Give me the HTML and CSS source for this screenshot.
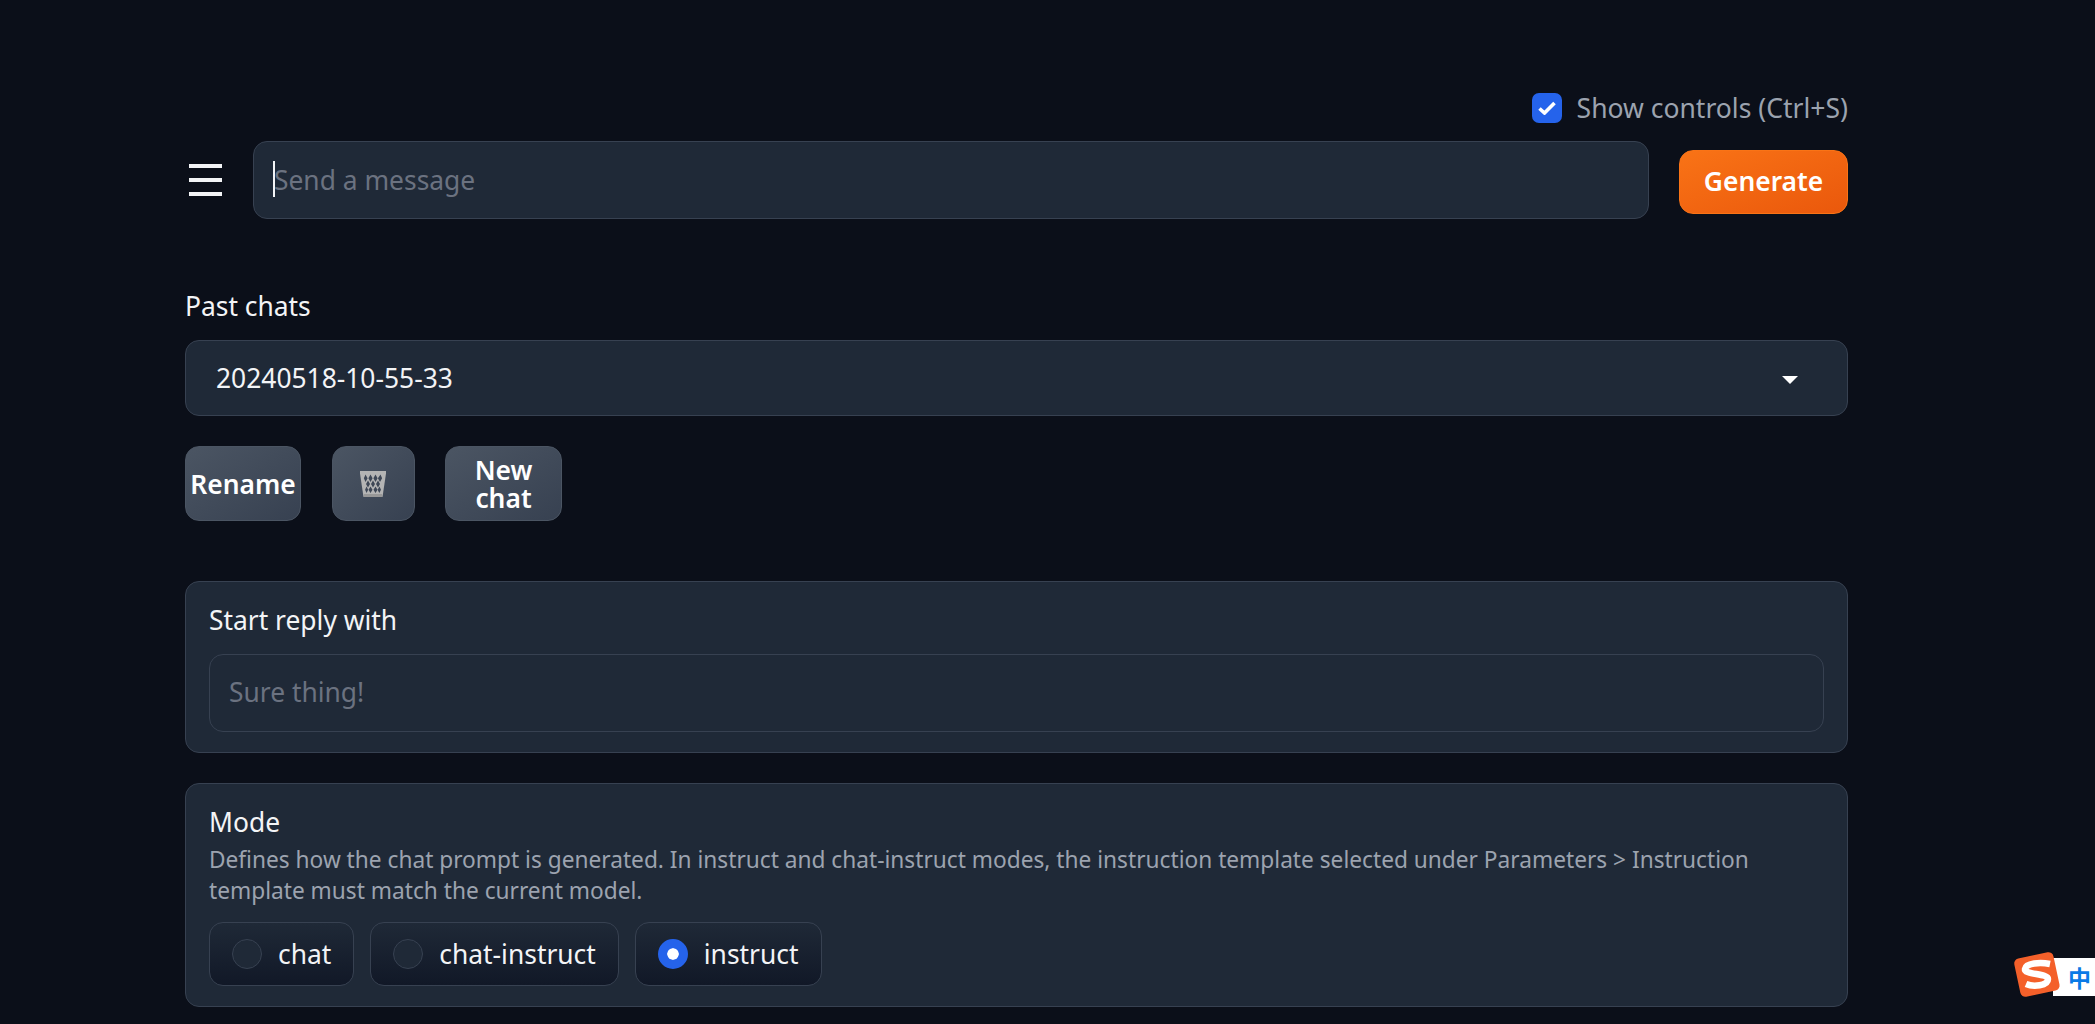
FILE: index.html
```html
<!DOCTYPE html>
<html lang="en">
<head>
  <meta charset="UTF-8" />
  <title>Chat</title>
  <link rel="stylesheet" href="styles.css">
</head>
<body>
  <main class="page">
    <!-- Show controls -->
    <label class="show-controls">
      <span class="check">
        <svg width="18" height="14" viewBox="0 0 18 14"><path d="M1.500 7.500 L6.500 12 L16.500 2" fill="none" stroke="#fff" stroke-width="3.600"/></svg>
      </span>
      Show controls (Ctrl+S)
    </label>

    <!-- Message row -->
    <div class="message-row">
      <button class="hamburger" aria-label="Menu"><span></span><span></span><span></span></button>
      <div class="message-box">
        <input class="message-input" type="text" placeholder="Send a message">
        <span class="caret"></span>
      </div>
      <button class="generate">Generate</button>
    </div>

    <!-- Past chats -->
    <div class="past-chats">
      <div class="field-label">Past chats</div>
      <div class="dropdown">
        <span>20240518-10-55-33</span>
        <svg class="dropdown-arrow" width="16" height="8" viewBox="0 0 16 8"><path d="M0 0 H16 L8 8 Z" fill="#fff"/></svg>
      </div>
    </div>

    <div class="chat-buttons">
      <button class="btn btn-rename">Rename</button>
      <button class="btn btn-trash" aria-label="Delete">
        <svg class="trash-icon" width="26" height="26" viewBox="0 0 26 26">
          <path d="M0 0 H26 V2.500 L22.500 26 H3.500 L0 2.500 Z" fill="#b4b4b4"/>
          <path d="M4 23 H22 V26 H4 Z" fill="#989898"/>
          <g fill="#3e4756">
            <path d="M5.500 3.500 l2.100 3.800 -2.100 3.800 -1.600-3.800z M10.500 3.500 l2.100 3.800 -2.100 3.800 -2.100-3.800z M15.500 3.500 l2.100 3.800 -2.100 3.800 -2.100-3.800z M20.500 3.500 l1.600 3.800 -2.100 3.800 -2.100-3.800z"/>
            <path d="M8 9.500 l2 3.500 -2 3.500 -2-3.500z M13 9.500 l2 3.500 -2 3.500 -2-3.500z M18 9.500 l2 3.500 -2 3.500 -2-3.500z"/>
            <path d="M6.500 15.500 l1.700 3.300 -1.700 3.300 -1.400-3.300z M10.500 15.500 l2 3.300 -2 3.300 -2-3.300z M15.500 15.500 l2 3.300 -2 3.300 -2-3.300z M19.500 15.500 l1.500 3.300 -1.700 3.300 -1.700-3.300z"/>
          </g>
        </svg>
      </button>
      <button class="btn btn-new">New<br>chat</button>
    </div>

    <!-- Start reply with -->
    <section class="block block-reply">
      <div class="field-label">Start reply with</div>
      <input class="reply-input" type="text" placeholder="Sure thing!">
    </section>

    <!-- Mode -->
    <section class="block block-mode">
      <div class="field-label">Mode</div>
      <p class="info">Defines how the chat prompt is generated. In instruct and chat-instruct modes, the instruction template selected under Parameters &gt; Instruction template must match the current model.</p>
      <div class="radios">
        <label class="radio"><span class="dot"></span>chat</label>
        <label class="radio"><span class="dot"></span>chat-instruct</label>
        <label class="radio"><span class="dot dot-on"></span>instruct</label>
      </div>
    </section>
  </main>

  <!-- IME status widget -->
  <div class="ime">
    <svg class="ime-logo" width="50" height="48" viewBox="0 0 50 48">
      <rect x="4" y="4" width="40" height="39" rx="5" fill="#f4602a" transform="rotate(-12 24 24)"/>
      <path d="M37 13 C27 11 13 12 12 18 C11 24 35 22 35 28 C35 35 20 36 13 33" fill="none" stroke="#fff" stroke-width="6.500"/>
    </svg>
    <span class="ime-lang">中</span>
  </div>
</body>
</html>
```

FILE: styles.css
```css
* {
  box-sizing: border-box;
}

html,
body {
  height: 100%;
}

body {
  margin: 0;
  overflow: hidden;
  background: #0b0f19;
  color: #f3f4f6;
  font-family: "Noto Sans", sans-serif;
  font-size: 26.4px;
}

button {
  font-family: inherit;
  cursor: pointer;
}

.page {
  width: 1663px;
  margin-left: 185px;
  padding-top: 90px;
}

.show-controls {
  display: flex;
  justify-content: flex-end;
  align-items: center;
  gap: 15px;
  height: 36px;
  color: #9ca3af;
  font-size: 26.5px;
}

.check {
  display: flex;
  align-items: center;
  justify-content: center;
  width: 30px;
  height: 30px;
  background: #2563eb;
  border-radius: 7px;
}

.message-row {
  display: flex;
  align-items: center;
  margin-top: 15px;
  height: 78px;
}

.hamburger {
  display: flex;
  flex-direction: column;
  gap: 10px;
  width: 68px;
  padding: 0 0 0 4px;
  background: none;
  border: 0;
}

.hamburger span {
  display: block;
  width: 33px;
  height: 4px;
  background: #f3f4f6;
}

.message-box {
  position: relative;
  flex: 1;
  height: 78px;
}

.message-input {
  width: 100%;
  height: 100%;
  padding: 0 20px;
  background: #1f2937;
  border: 1px solid #374151;
  border-radius: 14px;
  color: #f3f4f6;
  font: inherit;
  outline: none;
}

.message-input::placeholder,
.reply-input::placeholder {
  color: #6b7280;
  opacity: 1;
}

.caret {
  position: absolute;
  left: 20px;
  top: 20px;
  width: 2px;
  height: 36px;
  background: #f3f4f6;
}

.generate {
  width: 169px;
  height: 64px;
  margin-top: 4px;
  margin-left: 30px;
  padding: 0 0 2px;
  background: linear-gradient(to bottom right, #f97316, #ea580c);
  border: 1px solid #f97316;
  border-radius: 14px;
  color: #fff;
  font-size: 26.4px;
  font-weight: 600;
}

.past-chats {
  margin-top: 69px;
}

.field-label {
  line-height: 36px;
  color: #f3f4f6;
}

.dropdown {
  display: flex;
  align-items: center;
  justify-content: space-between;
  height: 76px;
  margin-top: 16px;
  padding-left: 30px;
  padding-right: 49px;
  background: #1f2937;
  border: 1px solid #374151;
  border-radius: 14px;
}

.dropdown-arrow {
  margin-top: 4px;
}

.chat-buttons {
  display: flex;
  gap: 30.5px;
  margin-top: 30px;
}

.btn {
  height: 75px;
  padding: 0;
  background: linear-gradient(to bottom right, #4b5563, #374151);
  border: 1px solid #4b5563;
  border-radius: 14px;
  color: #fff;
  font-size: 26.4px;
  font-weight: 600;
  line-height: 28px;
}

.btn-rename {
  width: 116px;
}

.btn-trash {
  width: 83px;
}

.btn-new {
  width: 117px;
}

.trash-icon {
  display: block;
  margin: 1px auto 0;
}

.block {
  padding: 20px 23px 0;
  background: #1f2937;
  border: 1px solid #374151;
  border-radius: 14px;
}

.block-reply {
  height: 172px;
  margin-top: 60px;
}

.reply-input {
  width: 100%;
  height: 78px;
  margin-top: 16px;
  padding: 0 19px 2px;
  background: #1f2937;
  border: 1px solid #374151;
  border-radius: 14px;
  color: #f3f4f6;
  font: inherit;
  outline: none;
}

.block-mode {
  height: 224px;
  margin-top: 30px;
}

.info {
  margin: 4px 0 0;
  color: #9ca3af;
  font-size: 22.7px;
  line-height: 31px;
}

.radios {
  display: flex;
  gap: 16px;
  margin-top: 16px;
}

.radio {
  display: flex;
  align-items: center;
  gap: 16px;
  height: 64px;
  padding: 0 22px;
  background: linear-gradient(to bottom, #1f2937, #111827);
  border: 1px solid #374151;
  border-radius: 14px;
}

.dot {
  width: 30px;
  height: 30px;
  background: #1f2937;
  border: 1px solid #374151;
  border-radius: 50%;
}

.dot-on {
  background: #2563eb;
  border: 9px solid #2563eb;
  box-shadow: inset 0 0 0 10px #fff;
}

.ime {
  position: fixed;
  right: 0;
  top: 951px;
  width: 82px;
  height: 48px;
}

.ime-lang {
  position: absolute;
  left: 40px;
  top: 7px;
  width: 42px;
  height: 38px;
  padding-left: 15px;
  background: #fff;
  color: #0a7ae6;
  font-family: "Noto Sans CJK SC", sans-serif;
  font-size: 23px;
  font-weight: 700;
  line-height: 38px;
  overflow: hidden;
}

.ime-logo {
  position: absolute;
  left: 0;
  top: 0;
  z-index: 1;
}
```
